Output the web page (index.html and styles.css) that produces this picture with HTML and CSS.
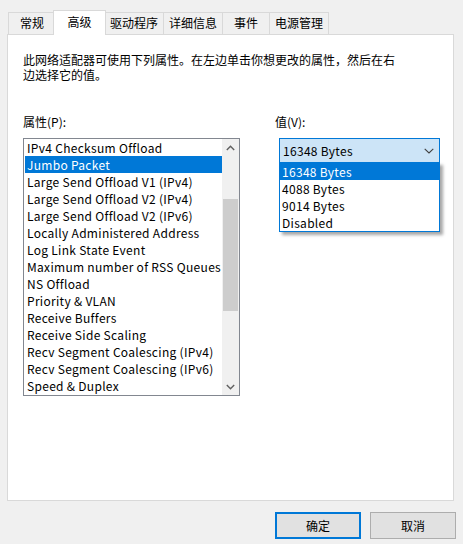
FILE: index.html
```html
<!DOCTYPE html>
<html lang="zh-CN">
<head>
<meta charset="utf-8">
<title>高级</title>
<link rel="stylesheet" href="styles.css">
</head>
<body>
<div class="dialog">
  <div class="tabs">
    <div class="tab tab-narrow">常规</div>
    <div class="tab tab-narrow tab-active">高级</div>
    <div class="tab">驱动程序</div>
    <div class="tab">详细信息</div>
    <div class="tab tab-narrow">事件</div>
    <div class="tab">电源管理</div>
  </div>
  <div class="panel">
    <p class="desc">此网络适配器可使用下列属性。在左边单击你想更改的属性，然后在右<br>边选择它的值。</p>
    <div class="columns">
      <div class="col-left">
        <div class="label">属性(P):</div>
        <div class="listbox">
          <div class="rows">
            <div class="row">IPv4 Checksum Offload</div>
            <div class="row row-sel">Jumbo Packet</div>
            <div class="row">Large Send Offload V1 (IPv4)</div>
            <div class="row">Large Send Offload V2 (IPv4)</div>
            <div class="row">Large Send Offload V2 (IPv6)</div>
            <div class="row">Locally Administered Address</div>
            <div class="row">Log Link State Event</div>
            <div class="row">Maximum number of RSS Queues</div>
            <div class="row">NS Offload</div>
            <div class="row">Priority &amp; VLAN</div>
            <div class="row">Receive Buffers</div>
            <div class="row">Receive Side Scaling</div>
            <div class="row">Recv Segment Coalescing (IPv4)</div>
            <div class="row">Recv Segment Coalescing (IPv6)</div>
            <div class="row">Speed &amp; Duplex</div>
          </div>
          <div class="scrollbar">
            <div class="sb-btn">
              <svg width="9" height="6" viewBox="0 0 9 6"><polyline points="0.8,5 4.5,1.3 8.2,5" fill="none" stroke="#606060" stroke-width="1.4"/></svg>
            </div>
            <div class="sb-track">
              <div class="sb-gap"></div>
              <div class="sb-thumb"></div>
            </div>
            <div class="sb-btn">
              <svg width="9" height="6" viewBox="0 0 9 6"><polyline points="0.8,1 4.5,4.7 8.2,1" fill="none" stroke="#606060" stroke-width="1.4"/></svg>
            </div>
          </div>
        </div>
      </div>
      <div class="col-right">
        <div class="label">值(V):</div>
        <div class="combo-wrap">
          <div class="combo">
            <span class="latin">16348 Bytes</span>
            <svg width="10" height="6" viewBox="0 0 10 6"><polyline points="0.7,0.8 5,5 9.3,0.8" fill="none" stroke="#404040" stroke-width="1.1"/></svg>
          </div>
          <div class="droplist">
            <div class="opt opt-sel">16348 Bytes</div>
            <div class="opt">4088 Bytes</div>
            <div class="opt">9014 Bytes</div>
            <div class="opt">Disabled</div>
          </div>
        </div>
      </div>
    </div>
  </div>
  <div class="buttons">
    <button class="btn btn-default">确定</button>
    <button class="btn">取消</button>
  </div>
</div>
</body>
</html>
```
FILE: styles.css
```css
html, body {
  margin: 0;
  padding: 0;
  background: #f0f0f0;
}
body {
  font-family: "Noto Sans CJK SC", "Microsoft YaHei", sans-serif;
  font-size: 12px;
  color: #000;
  width: 463px;
  height: 544px;
  overflow: hidden;
}
.dialog {
  display: flex;
  flex-direction: column;
}
.tabs {
  display: flex;
  align-items: flex-end;
  height: 24px;
  padding: 10px 0 0 8px;
}
.tab {
  box-sizing: border-box;
  height: 22px;
  line-height: 20px;
  padding: 0 5px;
  border: 1px solid #d9d9d9;
  border-bottom: none;
  margin-right: -1px;
  background: #f0f0f0;
  text-align: center;
  white-space: nowrap;
}
.tab-narrow {
  min-width: 48px;
}
.tab-active {
  position: relative;
  z-index: 1;
  height: 25px;
  line-height: 21px;
  margin: 0 -2px -1px -2px;
  background: #fff;
  min-width: 53px;
}
.panel {
  box-sizing: border-box;
  height: 467px;
  margin: 0 9px 0 7px;
  border: 1px solid #d9d9d9;
  background: #fff;
  padding: 17px 15px 0 15px;
}
.desc {
  margin: 0;
  line-height: 15px;
}
.columns {
  display: flex;
  margin-top: 32px;
}
.label {
  line-height: 15px;
  margin-bottom: 9px;
}
.col-left {
  width: 217px;
}
.col-right {
  margin-left: 35px;
  width: 165px;
}
.listbox {
  box-sizing: border-box;
  width: 217px;
  height: 258px;
  border: 1px solid #828790;
  padding-left: 1px;
  display: flex;
  background: #fff;
}
.rows {
  flex: 1;
  overflow: hidden;
}
.row {
  height: 17px;
  line-height: 17px;
  padding-left: 2px;
  white-space: nowrap;
  overflow: hidden;
  letter-spacing: 0.3px;
}
.row-sel {
  background: #0078d7;
  color: #fff;
}
.scrollbar {
  width: 17px;
  display: flex;
  flex-direction: column;
  background: #f0f0f0;
}
.sb-btn {
  height: 17px;
  display: flex;
  align-items: center;
  justify-content: center;
}
.sb-track {
  flex: 1;
  display: flex;
  flex-direction: column;
  align-items: center;
}
.sb-gap {
  height: 43px;
}
.sb-thumb {
  width: 15px;
  height: 112px;
  background: #cdcdcd;
}
.combo-wrap {
  position: relative;
  margin-left: 4px;
  width: 161px;
}
.combo {
  box-sizing: border-box;
  height: 25px;
  border: 1px solid #0078d7;
  background: #cce4f7;
  display: flex;
  align-items: center;
  justify-content: space-between;
  padding: 0 5px 0 3px;
}
.latin {
  letter-spacing: 0.3px;
}
.droplist {
  position: absolute;
  left: 0;
  top: 24px;
  width: 161px;
  box-sizing: border-box;
  border: 1px solid #0078d7;
  background: #fff;
  box-shadow: 3px 3px 3px rgba(0, 0, 0, 0.35);
  z-index: 2;
}
.opt {
  height: 17px;
  line-height: 17px;
  padding-left: 2px;
  white-space: nowrap;
  letter-spacing: 0.3px;
}
.opt-sel {
  background: #0078d7;
  color: #fff;
}
.buttons {
  display: flex;
  justify-content: flex-end;
  gap: 9px;
  margin: 11px 7px 0 0;
}
.btn {
  box-sizing: border-box;
  width: 86px;
  height: 27px;
  font-family: "Noto Sans CJK SC", "Microsoft YaHei", sans-serif;
  font-size: 12px;
  color: #000;
  background: #e1e1e1;
  border: 1px solid #adadad;
  padding: 0;
  margin: 0;
}
.btn-default {
  border: 2px solid #0078d7;
}
```
